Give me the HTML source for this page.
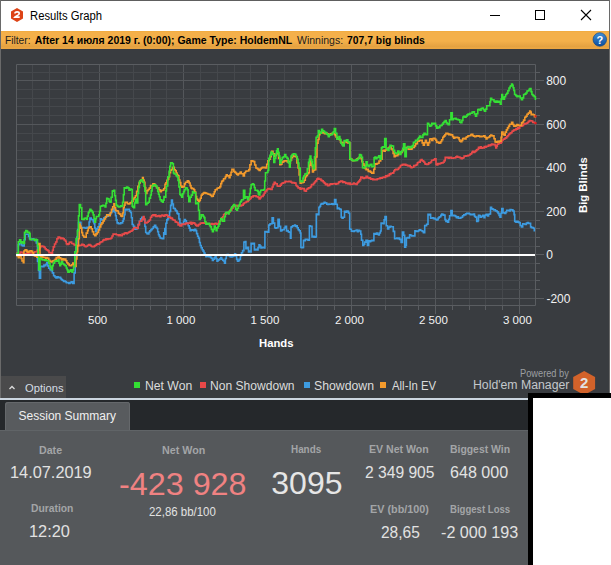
<!DOCTYPE html>
<html><head><meta charset="utf-8"><style>
html,body{margin:0;padding:0;width:611px;height:565px;overflow:hidden;background:#fff;}
body{position:relative;font-family:"Liberation Sans",sans-serif;}
div{position:absolute;white-space:nowrap;}
.t{line-height:1;transform-origin:0 0;}
svg{position:absolute;left:0;top:0;}
#win{left:0;top:0;width:610px;height:565px;background:#393c40;}
#title{left:0;top:0;width:610px;height:31px;background:#fff;}
#bt{left:0;top:0;width:610px;height:1px;background:#5e5e5e;}
#bl{left:0;top:0;width:1px;height:400px;background:#6a6a6a;}
#br{left:609px;top:0;width:1px;height:393px;background:#6a6a6a;}
#filter{left:1px;top:31px;width:608px;height:18px;background:linear-gradient(#f0a838 0px,#f4b04a 1px,#f4b04a 10px,#e3a040 16px,#eeaa44 17px,#e8a040 18px);}
#bigb{left:578.3px;top:213px;transform-origin:0 0;transform:rotate(-90deg);font-size:11.3px;line-height:1;font-weight:bold;color:#fff;}
#opt{left:1px;top:376px;width:65px;height:22px;background:#4a4a4b;}
#hl{left:0;top:398px;width:528px;height:2px;background:#ccd6e0;}
#dark{left:0;top:400px;width:528px;height:30px;background:#25282b;}
#tab{left:5px;top:402px;width:125px;height:28px;background:#585b5e;border-radius:3px 3px 0 0;box-shadow:inset 1px 1px 0 #65686b, inset -1px 0 0 #65686b;}
#panel{left:0;top:430px;width:611px;height:135px;background:#55585b;box-shadow:inset 0 1px 0 #606467;}
.sq{width:6px;height:6px;top:382px;}
#box{left:528px;top:393px;width:90px;height:172px;background:#fff;border:5px solid #000;border-bottom-width:4px;border-right:none;}
</style></head><body>
<div id="win"></div>
<div id="title"></div>
<div id="bt"></div>
<div id="bl"></div>
<div id="br"></div>
<svg width="30" height="30"><polygon points="17,8 23,11.5 23,18.5 17,22 11,18.5 11,11.5" fill="#dd4316"/><path d="M14.9,13.6 Q14.9,11.9 17.1,11.9 Q19.2,11.9 19.2,13.4 Q19.2,14.6 17.5,15.4 Q15.6,16.3 14.9,17.1 H19.7" fill="none" stroke="#fff" stroke-width="1.6"/></svg>
<svg width="611" height="31"><rect x="490" y="15" width="10" height="1" fill="#000"/><rect x="535.5" y="10.5" width="9" height="9" fill="none" stroke="#000" stroke-width="1"/><path d="M581,10 L591,20 M591,10 L581,20" stroke="#000" stroke-width="1.1"/></svg>
<div id="filter"></div>
<svg width="611" height="60" style="top:20px"><defs><linearGradient id="hg" x1="0" y1="0" x2="0" y2="1"><stop offset="0" stop-color="#3f8fd8"/><stop offset="1" stop-color="#0d4d9a"/></linearGradient></defs><circle cx="599.8" cy="19.5" r="6.8" fill="url(#hg)" stroke="#0a3f80" stroke-width="0.6"/><text x="599.8" y="23.5" text-anchor="middle" font-family="Liberation Sans" font-weight="bold" font-size="11" fill="#fff">?</text></svg>
<svg width="611" height="400">
<rect x="32" y="65" width="1" height="240" fill="#45484c"/>
<rect x="49" y="65" width="1" height="240" fill="#45484c"/>
<rect x="66" y="65" width="1" height="240" fill="#45484c"/>
<rect x="82" y="65" width="1" height="240" fill="#45484c"/>
<rect x="99" y="65" width="1" height="240" fill="#54575b"/>
<rect x="116" y="65" width="1" height="240" fill="#45484c"/>
<rect x="133" y="65" width="1" height="240" fill="#45484c"/>
<rect x="150" y="65" width="1" height="240" fill="#45484c"/>
<rect x="166" y="65" width="1" height="240" fill="#45484c"/>
<rect x="183" y="65" width="1" height="240" fill="#54575b"/>
<rect x="200" y="65" width="1" height="240" fill="#45484c"/>
<rect x="217" y="65" width="1" height="240" fill="#45484c"/>
<rect x="234" y="65" width="1" height="240" fill="#45484c"/>
<rect x="250" y="65" width="1" height="240" fill="#45484c"/>
<rect x="267" y="65" width="1" height="240" fill="#54575b"/>
<rect x="284" y="65" width="1" height="240" fill="#45484c"/>
<rect x="301" y="65" width="1" height="240" fill="#45484c"/>
<rect x="317" y="65" width="1" height="240" fill="#45484c"/>
<rect x="334" y="65" width="1" height="240" fill="#45484c"/>
<rect x="351" y="65" width="1" height="240" fill="#54575b"/>
<rect x="368" y="65" width="1" height="240" fill="#45484c"/>
<rect x="385" y="65" width="1" height="240" fill="#45484c"/>
<rect x="401" y="65" width="1" height="240" fill="#45484c"/>
<rect x="418" y="65" width="1" height="240" fill="#45484c"/>
<rect x="435" y="65" width="1" height="240" fill="#54575b"/>
<rect x="452" y="65" width="1" height="240" fill="#45484c"/>
<rect x="469" y="65" width="1" height="240" fill="#45484c"/>
<rect x="485" y="65" width="1" height="240" fill="#45484c"/>
<rect x="502" y="65" width="1" height="240" fill="#45484c"/>
<rect x="519" y="65" width="1" height="240" fill="#54575b"/>
<rect x="17" y="298" width="518" height="1" fill="#54575b"/>
<rect x="17" y="289" width="518" height="1" fill="#45484c"/>
<rect x="17" y="280" width="518" height="1" fill="#45484c"/>
<rect x="17" y="272" width="518" height="1" fill="#45484c"/>
<rect x="17" y="263" width="518" height="1" fill="#45484c"/>
<rect x="17" y="254" width="518" height="1" fill="#54575b"/>
<rect x="17" y="246" width="518" height="1" fill="#45484c"/>
<rect x="17" y="237" width="518" height="1" fill="#45484c"/>
<rect x="17" y="228" width="518" height="1" fill="#45484c"/>
<rect x="17" y="220" width="518" height="1" fill="#45484c"/>
<rect x="17" y="211" width="518" height="1" fill="#54575b"/>
<rect x="17" y="202" width="518" height="1" fill="#45484c"/>
<rect x="17" y="193" width="518" height="1" fill="#45484c"/>
<rect x="17" y="185" width="518" height="1" fill="#45484c"/>
<rect x="17" y="176" width="518" height="1" fill="#45484c"/>
<rect x="17" y="167" width="518" height="1" fill="#54575b"/>
<rect x="17" y="159" width="518" height="1" fill="#45484c"/>
<rect x="17" y="150" width="518" height="1" fill="#45484c"/>
<rect x="17" y="141" width="518" height="1" fill="#45484c"/>
<rect x="17" y="133" width="518" height="1" fill="#45484c"/>
<rect x="17" y="124" width="518" height="1" fill="#54575b"/>
<rect x="17" y="115" width="518" height="1" fill="#45484c"/>
<rect x="17" y="106" width="518" height="1" fill="#45484c"/>
<rect x="17" y="98" width="518" height="1" fill="#45484c"/>
<rect x="17" y="89" width="518" height="1" fill="#45484c"/>
<rect x="17" y="80" width="518" height="1" fill="#54575b"/>
<rect x="17" y="72" width="518" height="1" fill="#45484c"/>
<path d="M16.5,64.5H535.5V305.5H16.5Z" fill="none" stroke="#5a5d61" stroke-width="1"/>
<rect x="536" y="298" width="8" height="1" fill="#5a5d61"/>
<rect x="536" y="289" width="4" height="1" fill="#5a5d61"/>
<rect x="536" y="280" width="4" height="1" fill="#5a5d61"/>
<rect x="536" y="272" width="4" height="1" fill="#5a5d61"/>
<rect x="536" y="263" width="4" height="1" fill="#5a5d61"/>
<rect x="536" y="254" width="8" height="1" fill="#5a5d61"/>
<rect x="536" y="246" width="4" height="1" fill="#5a5d61"/>
<rect x="536" y="237" width="4" height="1" fill="#5a5d61"/>
<rect x="536" y="228" width="4" height="1" fill="#5a5d61"/>
<rect x="536" y="220" width="4" height="1" fill="#5a5d61"/>
<rect x="536" y="211" width="8" height="1" fill="#5a5d61"/>
<rect x="536" y="202" width="4" height="1" fill="#5a5d61"/>
<rect x="536" y="193" width="4" height="1" fill="#5a5d61"/>
<rect x="536" y="185" width="4" height="1" fill="#5a5d61"/>
<rect x="536" y="176" width="4" height="1" fill="#5a5d61"/>
<rect x="536" y="167" width="8" height="1" fill="#5a5d61"/>
<rect x="536" y="159" width="4" height="1" fill="#5a5d61"/>
<rect x="536" y="150" width="4" height="1" fill="#5a5d61"/>
<rect x="536" y="141" width="4" height="1" fill="#5a5d61"/>
<rect x="536" y="133" width="4" height="1" fill="#5a5d61"/>
<rect x="536" y="124" width="8" height="1" fill="#5a5d61"/>
<rect x="536" y="115" width="4" height="1" fill="#5a5d61"/>
<rect x="536" y="106" width="4" height="1" fill="#5a5d61"/>
<rect x="536" y="98" width="4" height="1" fill="#5a5d61"/>
<rect x="536" y="89" width="4" height="1" fill="#5a5d61"/>
<rect x="536" y="80" width="8" height="1" fill="#5a5d61"/>
<rect x="536" y="72" width="4" height="1" fill="#5a5d61"/>
<rect x="32" y="306" width="1" height="4" fill="#5a5d61"/>
<rect x="49" y="306" width="1" height="4" fill="#5a5d61"/>
<rect x="66" y="306" width="1" height="4" fill="#5a5d61"/>
<rect x="82" y="306" width="1" height="4" fill="#5a5d61"/>
<rect x="99" y="306" width="1" height="8" fill="#5a5d61"/>
<rect x="116" y="306" width="1" height="4" fill="#5a5d61"/>
<rect x="133" y="306" width="1" height="4" fill="#5a5d61"/>
<rect x="150" y="306" width="1" height="4" fill="#5a5d61"/>
<rect x="166" y="306" width="1" height="4" fill="#5a5d61"/>
<rect x="183" y="306" width="1" height="8" fill="#5a5d61"/>
<rect x="200" y="306" width="1" height="4" fill="#5a5d61"/>
<rect x="217" y="306" width="1" height="4" fill="#5a5d61"/>
<rect x="234" y="306" width="1" height="4" fill="#5a5d61"/>
<rect x="250" y="306" width="1" height="4" fill="#5a5d61"/>
<rect x="267" y="306" width="1" height="8" fill="#5a5d61"/>
<rect x="284" y="306" width="1" height="4" fill="#5a5d61"/>
<rect x="301" y="306" width="1" height="4" fill="#5a5d61"/>
<rect x="317" y="306" width="1" height="4" fill="#5a5d61"/>
<rect x="334" y="306" width="1" height="4" fill="#5a5d61"/>
<rect x="351" y="306" width="1" height="8" fill="#5a5d61"/>
<rect x="368" y="306" width="1" height="4" fill="#5a5d61"/>
<rect x="385" y="306" width="1" height="4" fill="#5a5d61"/>
<rect x="401" y="306" width="1" height="4" fill="#5a5d61"/>
<rect x="418" y="306" width="1" height="4" fill="#5a5d61"/>
<rect x="435" y="306" width="1" height="8" fill="#5a5d61"/>
<rect x="452" y="306" width="1" height="4" fill="#5a5d61"/>
<rect x="469" y="306" width="1" height="4" fill="#5a5d61"/>
<rect x="485" y="306" width="1" height="4" fill="#5a5d61"/>
<rect x="502" y="306" width="1" height="4" fill="#5a5d61"/>
<rect x="519" y="306" width="1" height="8" fill="#5a5d61"/>
<path d="M17.1,253.5H18.3V244.8H19.2V243.5H20.2V243.5H21.2V245.0H22.3V245.6H23.3V246.0H24.2V239.7H25.2V234.3H26.4V234.3H27.6V234.3H28.6V236.4H29.5V238.6H30.6V239.2H31.6V239.7H32.7V238.8H33.8V239.8H35.0V240.5H36.3V242.9H37.5V261.5H38.5V270.5H39.4V278.2H40.6V266.5H41.7V266.2H42.8V266.6H43.9V265.1H45.0V265.8H45.9V264.2H46.8V262.8H47.8V265.9H48.7V268.3H50.0V269.7H51.2V270.8H52.4V272.9H53.6V275.8H54.9V277.0H56.0V278.0H57.0V276.7H58.1V277.8H59.4V277.3H60.6V278.6H61.4V279.5H62.2V280.2H63.5V281.4H64.7V281.1H65.5V281.7H66.3V282.7H67.5V282.6H68.7V283.5H70.0V282.6H71.2V281.9H72.0V281.9H72.8V283.5H74.1V272.9H75.2V258.3H76.1V247.2H76.9V237.1H77.7V229.6H78.5V222.4H79.3V222.4H80.1V222.4H80.9V228.1H81.9V227.6H82.9V227.6H83.8V227.6H84.8V228.0H85.8V228.1H87.0V227.3H88.3V227.3H89.1V222.0H89.9V218.4H90.0V218.1H91.2V219.5H92.4V219.7H93.2V221.8H94.0V223.7H94.8V228.0H95.6V231.7H96.8V228.7H98.0V226.9H99.2V223.8H100.4V218.9H101.6V219.9H102.7V219.7H103.9V217.8H105.1V217.3H106.2V216.2H107.2V216.1H108.3V214.9H109.5V214.1H110.7V212.5H111.9V211.3H113.1V208.6H114.3V212.0H115.5V215.7H116.3V219.9H117.1V222.9H118.3V223.6H119.5V223.7H120.7V222.9H121.8V222.9H122.6V221.1H123.4V218.9H124.2V214.8H125.0V209.4H126.1V210.0H127.1V209.4H128.2V209.4H129.4V211.1H130.6V212.5H131.4V217.7H132.2V224.5H133.4V226.4H134.6V229.3H135.8V229.0H137.0V227.7H138.2V224.3H139.4V221.3H140.6V218.7H141.8V217.3H142.9V218.6H144.1V219.7H144.9V226.5H145.7V232.5H146.9V233.6H148.1V234.0H148.9V232.2H149.7V230.9H150.9V229.6H152.1V228.5H153.3V226.9H154.5V225.3H155.7V227.4H156.9V228.5H157.7V231.7H158.5V234.8H159.3V236.2H160.1V238.0H161.3V238.4H162.5V238.8H163.7V232.8H164.8V228.5H165.0V234.3H165.9V223.2H166.8V219.9H167.8V218.6H168.7V215.8H169.6V211.4H170.6V205.4H171.5V200.0H172.4V204.0H173.4V208.3H174.3V208.6H175.3V210.2H176.2V211.1H177.1V213.4H178.0V213.9H178.9V219.0H179.9V223.2H180.8V223.6H181.8V224.4H182.7V224.1H183.6V221.3H184.5V219.5H185.4V220.8H186.4V222.8H187.3V223.2H188.2V225.8H189.2V228.1H190.1V230.6H191.0V229.9H192.0V230.1H192.9V229.7H193.8V230.8H194.8V229.4H195.7V230.6H196.6V233.6H197.6V236.2H198.5V238.1H199.4V242.5H200.3V245.5H201.2V247.8H202.2V249.8H203.1V251.1H204.0V253.0H205.0V254.9H205.9V256.7H206.8V256.3H207.8V255.4H208.7V256.6H209.6V255.7H210.5V257.4H211.5V258.3H212.4V260.4H213.3V259.2H214.3V257.9H215.2V256.7H216.1V258.7H217.0V261.3H217.9V260.1H218.9V259.5H219.9V258.7H220.8V257.6H221.7V259.2H222.7V260.3H223.6V261.0H224.5V263.2H225.4V258.5H226.3V254.8H227.2V254.5H228.2V255.6H229.1V255.7H230.0V256.7H231.0V256.9H231.9V256.7H232.8V256.3H233.8V255.4H234.7V253.9H235.6V255.9H236.6V259.4H237.5V261.3H238.4V260.7H239.3V259.4H240.4V255.7H241.5V252.7H242.6V250.6H243.9V242.1H245.2V241.5H245.9V248.7H247.2V247.4H248.5V251.9H249.5V251.0H250.5V251.9H251.1V243.4H252.1V243.9H253.1V243.4H254.4V250.0H255.3V249.5H256.1V249.3H257.0V250.0H258.0V247.6H259.0V244.7H259.9V246.1H260.9V248.0H262.0V247.2H263.1V247.4H264.2V248.0H264.9V231.6H265.8V231.9H266.6V231.5H267.5V232.3H268.8V225.1H269.8V224.0H270.8V223.8H272.1V217.9H273.4V223.1H274.7V227.7H275.6V228.1H276.6V227.7H278.0V219.2H279.3V226.4H280.6V231.0H281.5V230.5H282.3V229.8H283.2V229.7H284.2V228.0H285.2V226.4H286.5V231.0H287.4V230.6H288.2V231.7H289.1V232.3H290.4V238.2H291.0V227.1H291.9V226.5H292.8V225.7H293.7V225.8H294.6V225.1H295.4V226.5H296.3V225.8H297.2V227.8H298.2V229.7H299.2V230.8H300.2V233.0H300.9V247.4H301.9V247.6H302.8V247.4H303.5V240.2H304.4V240.8H305.3V239.3H306.3V239.3H307.2V239.6H308.1V240.2H309.4V225.8H310.4V226.5H311.3V226.4H312.0V236.9H313.1V236.3H314.2V237.3H315.3V236.9H315.7V236.9H316.3V214.0H317.3V214.6H318.3V214.6H318.9V207.4H319.8V206.2H320.6V204.3H321.5V203.5H322.4V203.9H323.3V203.2H324.2V202.2H325.1V202.9H325.9V203.0H326.8V204.2H327.8V204.5H328.8V204.0H329.7V204.3H330.7V204.2H331.8V203.9H332.9V204.4H334.0V204.2H334.6V199.6H335.9V204.2H337.3V208.7H338.2V208.1H339.0V208.8H339.9V209.4H341.2V217.3H342.1V218.1H343.1V217.3H344.5V211.4H345.6V212.1H346.6V211.1H347.7V211.4H348.5V213.0H349.3V213.3H349.7V229.0H350.6V229.3H351.4V231.1H352.3V231.0H353.3V231.4H354.4V230.8H355.4V230.6H356.4V230.1H357.4V231.7H358.5V230.2H359.5V231.0H360.8V234.3H361.5V240.2H362.8V245.4H363.8V244.3H364.7V242.1H366.0V240.2H367.4V245.4H368.7V240.8H369.7V241.6H370.6V240.9H371.6V240.2H372.6V240.8H373.9V233.6H374.8V234.1H375.6V234.1H376.5V233.0H377.5V234.3H378.5V234.9H379.4V233.0H380.4V231.0H381.1V223.1H382.1V223.2H383.1V223.8H384.1V219.9H385.0V216.6H386.3V225.8H387.6V229.0H388.8V227.1H390.0V226.2H391.0V226.8H392.0V226.8H393.3V231.4H394.6V238.6H395.7V238.5H396.8V238.0H397.9V238.6H398.8V238.1H399.6V239.4H400.5V239.3H401.1V242.5H402.4V232.1H403.7V235.3H404.7V247.1H405.7V245.2H406.4V238.0H407.4V237.6H408.3V238.0H409.6V234.7H410.6V235.3H411.6V236.0H412.6V235.7H413.6V236.0H414.9V230.8H416.0V231.5H417.0V231.5H418.1V230.8H419.2V229.9H420.3V230.3H421.4V230.8H422.4V231.4H423.4V232.7H424.7V225.5H425.6V225.7H426.6V224.2H428.0V214.4H428.9V214.9H429.9V214.4H430.6V218.3H431.6V218.0H432.6V217.8H433.5V218.6H434.5V218.3H435.4V219.3H436.2V219.9H437.1V219.6H438.1V218.0H439.1V217.0H440.0V216.7H440.8V215.4H441.7V214.1H442.7V214.6H443.7V215.1H445.0V219.6H445.9V221.4H446.7V220.9H447.6V222.3H448.6V219.4H449.6V215.7H450.9V210.5H452.2V215.7H453.3V215.2H454.3V215.6H455.4V216.4H456.4V217.6H457.4V216.8H458.4V218.3H459.4V218.3H460.5V217.6H461.5V217.2H462.6V215.7H463.8V214.9H465.0V214.6H465.9V213.7H466.8V213.4H468.1V213.3H469.3V214.0H470.4V214.7H471.5V214.2H472.5V214.8H473.6V214.0H474.5V216.2H475.4V217.1H476.7V221.4H477.9V220.8H478.5V215.2H479.4V215.5H480.3V217.1H481.6V216.2H482.8V215.2H484.0V217.7H484.9V215.4H485.9V214.6H486.8V214.4H487.7V215.9H488.6V214.2H489.5V214.0H490.5V207.3H491.6V208.9H492.6V209.1H493.5V209.9H494.4V209.7H495.4V210.9H496.3V211.0H497.2V211.9H498.1V213.4H499.1V215.5H500.0V217.1H500.9V213.3H501.8V208.5H503.0V212.8H503.9V212.9H504.9V213.4H505.8V212.0H506.7V210.3H507.9V210.2H509.2V211.0H510.1V209.6H511.0V209.7H511.9V209.9H512.9V211.0H514.1V214.6H514.7V221.4H515.9V222.1H517.1V221.4H518.0V222.1H519.0V222.6H520.2V225.5H521.4V226.9H522.7V223.8H523.9V224.0H525.1V224.4H526.4V223.1H527.6V222.6H528.5V223.4H529.4V223.2H530.6V226.9H531.5V227.8H532.5V227.5H533.4V228.2H534.3V230.6" fill="none" stroke="#3d9be0" stroke-width="1.6" stroke-linejoin="miter" stroke-linecap="square"/>
<path d="M17.1,253.0H18.2V253.8H19.2V253.7H20.3V252.1H21.4V252.8H22.3V252.2H23.3V253.8H24.2V253.7H25.2V253.5H26.1V253.6H27.0V252.8H28.0V253.2H28.9V252.8H29.9V253.0H30.9V252.9H31.8V252.2H32.8V252.7H33.8V252.8H34.7V251.8H35.6V251.7H36.6V251.4H37.5V249.7H38.5V249.6H39.4V247.9H40.3V246.8H41.3V246.0H42.3V246.3H43.3V246.6H44.2V247.4H45.2V248.9H46.2V249.7H47.2V250.1H48.1V250.9H49.0V252.6H50.0V252.6H50.8V253.0H51.6V253.4H52.5V250.3H53.3V246.9H54.5V244.0H55.7V242.0H56.9V238.7H58.1V237.1H59.4V237.6H60.6V238.7H61.8V238.0H63.0V238.7H64.2V240.0H65.5V241.2H66.3V243.7H67.1V244.4H68.2V243.9H69.3V242.2H70.4V242.0H71.6V243.5H72.8V243.6H73.9V244.7H75.0V245.1H76.1V245.2H77.3V245.9H78.5V245.2H79.6V245.4H80.7V245.2H81.8V244.4H83.0V244.9H84.2V246.0H85.3V246.6H86.4V246.3H87.5V245.2H88.8V244.6H90.0V245.2H91.1V246.2H92.1V246.7H93.2V246.8H94.3V245.9H95.3V245.3H96.4V244.4H97.5V243.8H98.5V244.1H99.6V242.8H100.6V242.0H101.7V241.8H102.7V240.4H103.8V239.6H104.8V240.0H105.9V238.8H106.9V239.5H107.9V238.7H108.9V238.9H109.9V238.8H111.0V238.0H112.0V236.0H113.1V234.0H114.2V234.2H115.2V234.0H116.3V234.8H117.3V234.7H118.3V235.6H119.3V234.8H120.3V235.6H121.3V235.7H122.2V234.0H123.2V234.5H124.2V233.2H125.2V232.7H126.2V233.7H127.2V233.0H128.2V232.5H129.2V231.9H130.2V231.3H131.2V231.0H132.2V230.1H133.0V229.1H133.8V227.7H134.9V227.6H135.9V227.7H137.0V228.5H138.2V224.9H139.4V221.3H140.6V221.3H141.8V219.7H142.6V218.3H143.3V216.5H144.1V218.9H144.9V222.9H146.0V222.9H147.0V222.2H148.1V221.3H149.3V220.0H150.5V217.3H151.7V215.5H152.9V214.9H153.9V215.7H154.9V214.9H155.9V216.4H156.9V216.5H157.9V215.9H158.9V215.6H159.9V216.6H160.9V215.7H161.9V215.0H162.9V215.7H163.8V216.3H164.8V215.7H165.0V214.8H165.9V214.8H166.8V215.2H167.8V216.9H168.7V216.7H169.6V217.3H170.6V218.5H171.5V218.0H172.4V219.5H173.3V220.0H174.3V220.3H175.2V221.9H176.2V222.3H177.1V222.5H178.1V225.0H179.0V224.2H179.9V226.0H180.8V225.9H181.8V224.2H182.7V224.1H183.6V224.1H184.5V224.5H185.5V223.2H186.4V223.1H187.3V223.8H188.3V223.1H189.2V223.2H190.1V222.4H191.1V224.1H192.0V222.6H192.9V223.2H193.8V222.9H194.7V224.0H195.7V225.1H196.6V225.9H197.5V226.0H198.4V224.6H199.3V224.3H200.3V223.1H201.2V223.2H202.1V222.9H203.1V223.2H204.1V223.0H205.0V222.3H205.9V223.5H206.8V223.7H207.8V224.3H208.7V224.1H209.6V224.5H210.5V224.1H211.5V223.6H212.4V224.4H213.3V224.1H214.2V223.8H215.2V223.4H216.1V224.0H217.0V224.1H217.9V223.6H218.9V221.1H219.9V220.8H220.8V219.5H221.7V217.9H222.7V216.7H223.6V214.7H224.5V213.9H225.4V214.3H226.3V212.7H227.3V213.0H228.2V212.2H229.1V212.0H230.0V210.0H231.0V209.9H231.9V208.1H232.9V206.8H233.8V206.5H234.7V205.5H235.6V205.6H236.6V205.3H237.5V206.1H238.4V205.7H239.3V205.5H240.3V205.9H241.2V205.4H242.2V205.1H243.2V203.8H244.2V202.7H245.2V202.5H246.2V201.6H247.2V201.4H248.2V200.4H249.1V199.3H250.1V198.4H251.1V196.7H252.1V196.9H253.1V195.9H254.1V196.0H255.1V195.9H256.1V196.7H257.1V196.6H258.1V197.4H259.1V199.0H260.1V197.8H261.1V196.3H262.1V196.4H263.1V195.0H264.1V193.3H265.0V191.8H266.0V190.6H266.9V189.5H267.9V188.7H268.9V188.5H270.0V189.3H271.0V189.5H272.1V187.0H273.1V184.4H274.2V182.3H275.2V183.6H276.2V183.8H277.2V186.0H278.2V186.3H279.2V186.3H280.2V185.1H281.2V183.8H282.2V183.1H283.2V182.8H284.1V182.6H285.1V181.3H286.0V181.7H287.0V181.5H288.0V181.7H289.0V181.3H290.0V181.4H291.0V182.3H292.0V183.0H292.9V182.5H293.9V182.9H294.9V183.1H296.0V185.5H297.0V186.5H298.1V187.9H299.1V187.7H300.1V189.2H301.1V188.3H302.1V188.7H303.2V188.6H304.2V190.6H305.3V191.1H306.4V189.3H307.4V188.6H308.5V187.9H309.5V187.7H310.5V186.6H311.5V184.6H312.5V184.7H313.5V183.4H314.6V182.0H315.6V180.9H316.7V179.1H317.7V178.4H318.8V179.2H319.9V179.0H321.0V180.4H322.1V180.9H323.2V182.0H324.3V183.1H325.4V184.8H326.5V184.1H327.6V185.7H328.6V185.5H329.6V184.4H330.6V183.7H331.6V184.2H332.6V183.7H333.6V183.7H334.6V183.6H335.6V184.2H336.6V183.5H337.6V183.7H338.6V182.1H339.6V181.8H340.6V181.1H341.6V181.0H342.6V182.4H343.6V181.8H344.7V182.5H345.8V183.5H346.9V183.1H348.0V183.9H349.1V183.1H350.2V184.4H351.3V184.3H352.4V184.0H353.5V183.1H354.4V183.9H355.3V184.0H356.2V184.4H357.1V183.0H357.9V182.1H358.8V181.1H359.8V179.6H360.8V177.1H361.7V177.1H362.6V178.0H363.5V178.4H364.4V177.7H365.2V177.9H366.1V176.4H367.2V177.4H368.3V178.1H369.4V177.8H370.5V179.1H371.7V178.8H372.8V179.8H373.9V179.3H375.0V179.8H376.1V179.8H377.1V178.9H378.1V178.7H379.1V178.6H380.1V177.8H381.2V178.3H382.3V177.5H383.4V177.1H384.5V177.4H385.6V175.9H386.7V176.4H387.6V175.3H388.5V175.6H389.4V173.8H390.0V174.4H390.9V173.3H391.9V173.3H392.8V172.9H393.8V171.0H394.7V169.8H395.7V169.4H396.6V169.6H397.6V169.3H398.5V168.0H399.4V167.3H400.4V165.5H401.3V165.2H402.2V164.6H403.1V164.3H404.0V164.9H404.9V164.4H405.8V165.1H406.6V165.0H407.5V165.6H408.4V165.9H409.3V165.6H410.2V166.7H411.1V167.8H412.0V167.3H412.9V167.2H413.8V165.5H414.6V165.8H415.5V165.2H416.4V164.6H417.4V162.8H418.3V162.3H419.3V162.1H420.2V160.4H421.2V159.5H422.1V160.8H423.1V161.2H424.0V162.3H424.9V163.9H425.9V164.2H426.8V164.4H427.8V164.1H428.7V162.8H429.7V163.0H430.6V162.0H431.6V160.3H432.5V160.2H433.6V159.7H434.6V158.8H436.0V164.4H436.9V164.9H437.8V163.5H438.7V163.9H439.6V163.7H440.5V163.3H441.4V162.8H442.2V163.0H443.1V162.3H444.1V160.6H445.2V157.4H446.3V157.8H447.4V157.4H448.4V158.2H449.5V157.4H450.4V157.3H451.4V158.3H452.3V158.1H453.2V158.0H454.1V157.9H455.0V157.7H455.9V156.7H456.8V156.4H457.6V157.3H458.5V157.0H459.4V157.4H460.3V157.9H461.3V158.7H462.2V158.1H463.1V157.7H464.1V156.0H465.0V156.2H466.0V155.9H467.0V156.0H468.0V155.4H468.9V155.3H469.9V154.2H470.9V153.7H471.8V152.4H472.7V151.2H473.6V152.4H474.6V151.7H475.5V150.9H476.5V149.9H477.5V149.2H478.5V147.2H479.4V148.1H480.4V146.8H481.4V148.3H482.3V147.9H483.2V148.0H484.2V146.6H485.2V147.2H486.1V146.4H487.2V146.2H488.4V145.1H489.5V145.8H490.6V144.9H491.5V144.1H492.5V144.8H493.4V144.3H494.3V144.2H495.1V145.6H495.8V147.9H496.6V146.2H497.3V144.2H498.2V143.6H499.2V142.5H500.2V143.3H501.1V141.9H502.0V140.2H503.0V139.2H503.9V139.1H504.8V138.2H505.8V137.9H506.7V136.6H507.7V135.8H508.6V134.4H509.7V133.4H510.9V132.8H512.0V131.3H513.1V130.6H514.0V129.8H515.0V129.9H516.0V128.6H516.9V129.1H517.8V127.6H518.8V128.1H519.7V126.3H520.6V126.1H521.5V126.0H522.5V125.5H523.5V124.3H524.4V123.9H525.4V123.6H526.3V123.3H527.2V122.8H528.2V121.6H529.3V120.6H530.4V120.9H531.5V121.0H532.7V122.4H533.6V122.4H534.5V122.8H535.4V123.1" fill="none" stroke="#e84a4a" stroke-width="1.6" stroke-linejoin="miter" stroke-linecap="square"/>
<path d="M17.1,256.0H18.3V257.8H19.2V256.4H20.2V256.0H21.1V258.5H22.0V260.9H23.3V262.8H23.9V251.0H24.9V250.1H25.8V249.7H26.7V251.1H27.6V252.2H28.6V251.8H29.5V251.0H30.5V250.8H31.6V251.3H32.6V252.8H33.5V255.0H34.4V256.0H35.6V256.2H36.9V257.2H37.8V249.9H38.8V243.5H40.0V256.0H40.9V257.2H41.9V256.5H42.8V257.5H43.7V257.2H44.7V257.5H45.6V258.1H46.5V257.5H47.5V258.4H48.8V260.2H50.0V261.5H51.1V261.9H52.2V261.0H53.3V260.7H54.3V260.3H55.2V259.4H56.2V257.5H57.1V257.9H58.1V256.6H59.2V257.9H60.3V258.4H61.4V259.9H62.5V258.8H63.6V260.0H64.7V259.1H65.8V260.7H66.8V262.8H67.9V264.0H69.2V265.5H70.4V265.6H71.6V264.7H72.8V263.1H74.0V265.5H75.2V266.4H76.1V258.9H76.9V251.7H77.7V245.7H78.5V238.7H79.3V224.1H80.1V226.0H80.9V228.1H81.8V232.6H82.6V235.5H83.8V237.0H85.0V237.1H86.2V233.1H87.5V230.6H88.3V228.3H89.1V227.3H90.0V226.9H91.2V228.8H92.4V231.7H93.6V234.5H94.8V235.6H96.0V233.9H97.2V232.5H98.4V229.9H99.6V226.9H100.8V224.5H101.9V222.9H103.1V220.9H104.3V218.9H105.5V216.7H106.7V214.9H107.9V215.0H109.1V215.7H110.3V212.7H111.5V209.4H112.7V206.8H113.9V203.8H114.7V207.7H115.5V210.2H116.3V210.9H117.1V211.0H118.3V213.3H119.5V214.1H120.7V215.9H121.8V216.5H122.6V213.0H123.4V207.8H124.2V205.3H125.0V202.2H126.2V202.4H127.4V203.8H128.6V204.0H129.8V203.0H130.9V202.5H131.9V201.1H133.0V199.0H134.2V197.5H135.4V195.8H136.6V191.4H137.8V186.3H139.0V183.0H140.2V180.7H141.3V179.7H142.5V177.5H143.3V180.0H144.1V182.3H144.9V187.5H145.7V193.4H146.9V190.7H148.1V189.5H149.3V188.1H150.5V185.5H151.7V185.6H152.9V183.9H154.1V184.4H155.3V186.3H156.5V187.6H157.7V187.9H158.9V189.7H160.1V191.8H161.3V190.4H162.5V190.3H163.7V188.7H164.8V187.9H165.0V184.2H165.9V182.8H166.9V180.4H167.8V179.2H168.7V176.7H169.6V172.6H170.6V170.2H171.5V169.5H172.5V167.5H173.4V167.4H174.3V169.7H175.3V170.8H176.2V173.0H177.1V175.1H178.0V175.8H178.9V180.1H179.9V182.6H180.8V186.0H181.7V187.2H182.7V186.3H183.6V187.0H184.5V183.9H185.4V182.3H186.3V182.2H187.3V180.9H188.2V181.4H189.1V183.0H190.1V185.6H191.0V187.9H191.9V188.7H192.9V188.5H193.8V189.7H194.7V192.0H195.7V196.6H196.6V199.0H197.6V200.1H198.5V201.8H199.4V200.5H200.3V198.2H201.2V195.3H202.1V194.1H203.1V193.4H204.0V192.5H204.9V192.9H205.9V193.4H206.8V193.5H207.7V194.0H208.7V194.2H209.6V194.4H210.5V195.2H211.5V196.4H212.4V196.2H213.3V194.0H214.3V191.7H215.2V189.7H216.1V189.6H217.1V188.3H218.0V188.0H218.9V187.9H219.8V186.6H220.8V183.6H221.7V181.4H222.6V180.6H223.6V178.7H224.5V178.6H225.4V176.6H226.3V174.9H227.2V176.0H228.2V175.9H229.1V177.7H230.0V175.1H231.0V172.3H231.9V169.3H232.8V169.4H233.8V171.4H234.7V172.1H235.6V173.0H236.6V174.3H237.5V174.9H238.4V173.7H239.4V173.4H240.3V172.1H241.3V173.8H242.2V173.8H243.2V176.0H244.4V172.8H245.6V171.2H246.7V171.0H247.7V171.0H248.8V169.6H249.9V164.8H251.1V160.8H252.3V161.1H253.5V161.6H254.7V165.0H255.9V168.0H257.0V168.5H258.0V169.4H259.1V170.4H260.2V169.0H261.2V168.0H262.3V167.2H263.4V167.6H264.4V167.4H265.5V168.0H266.7V164.2H267.9V160.8H269.1V159.3H270.3V156.8H271.1V153.2H271.8V151.3H273.0V153.8H274.2V156.1H275.3V155.5H276.3V153.6H277.4V152.9H278.6V158.4H279.8V164.8H280.9V164.3H281.9V162.2H283.0V161.6H284.1V160.8H285.1V161.0H286.2V160.8H287.3V162.0H288.3V161.7H289.4V163.2H290.4V160.2H291.5V157.6H292.5V155.3H293.6V156.4H294.6V156.2H295.7V156.8H296.9V163.0H298.1V168.0H299.1V175.0H300.2V183.1H301.1V182.5H302.0V182.8H302.9V182.3H304.1V180.2H305.3V176.8H306.4V175.4H307.4V173.6H308.5V172.8H309.3V165.3H310.1V159.2H311.3V165.7H312.5V172.0H313.5V170.2H314.5V169.6H315.8V157.0H317.0V143.2H318.0V139.5H319.0V134.6H319.9V133.2H320.7V132.5H321.6V132.0H322.6V132.9H323.5V133.0H324.5V133.7H325.4V133.2H326.4V133.2H327.3V133.9H328.3V134.6H329.4V134.9H330.4V133.7H331.5V133.5H332.5V133.4H333.6V133.3H334.5V134.5H335.3V135.8H336.2V137.3H337.3V139.1H338.4V138.8H339.4V139.6H340.5V142.3H341.6V142.6H342.6V142.9H343.6V142.8H344.5V141.4H345.5V141.2H346.6V142.5H347.8V142.9H348.9V142.6H349.8V159.2H350.8V159.0H351.8V160.2H352.8V160.6H353.8V160.5H354.8V160.5H355.9V159.9H357.0V158.8H358.0V158.2H359.1V157.4H360.2V157.2H361.1V158.6H361.9V161.8H362.8V163.8H363.9V165.4H365.0V168.4H366.1V169.8H367.2V169.4H368.3V171.4H369.4V171.1H370.5V172.1H371.7V173.2H372.8V173.1H373.8V169.2H374.8V163.8H375.9V164.3H377.0V163.5H378.1V163.2H379.0V161.0H379.8V161.0H380.7V159.2H382.1V150.5H383.1V150.3H384.1V151.2H385.2V150.0H386.3V149.8H387.4V148.6H388.3V148.0H389.1V147.2H390.0V146.7H391.1V148.9H392.1V149.6H393.1V153.4H394.2V156.7H395.1V155.9H396.0V155.2H396.9V155.7H397.8V154.5H398.7V153.9H399.6V154.0H400.4V152.7H401.3V152.4H402.3V150.5H403.2V149.7H404.2V148.2H405.1V148.8H405.9V147.6H406.8V148.7H407.7V148.2H408.6V149.1H409.4V149.1H410.3V149.3H411.2V148.9H412.3V147.3H413.4V147.5H414.4V145.9H415.5V143.9H416.4V143.6H417.4V141.2H418.3V141.1H419.3V140.5H420.2V140.2H421.2V140.4H422.2V142.9H423.3V145.3H424.4V142.7H425.4V140.4H426.4V142.8H427.5V145.3H428.6V142.6H429.7V139.0H430.8V138.8H431.8V140.4H432.9V138.5H433.9V138.2H434.8V139.0H435.8V140.4H436.7V142.5H437.8V142.1H438.9V143.2H439.8V142.9H440.8V141.5H441.7V139.7H442.8V137.2H443.8V136.1H444.9V134.7H445.9V133.3H446.9V133.4H447.8V133.9H448.8V134.7H449.7V134.4H450.7V135.0H451.6V134.7H452.6V136.6H453.7V138.2H454.6V137.8H455.5V137.3H456.4V137.4H457.3V137.5H458.2V137.9H459.1V139.7H459.9V141.1H460.8V141.8H461.8V140.4H462.7V138.6H463.7V138.2H465.0V138.9H466.0V137.3H467.0V136.7H468.0V135.9H468.9V135.7H469.9V135.7H470.9V134.6H471.8V134.4H472.8V135.7H473.8V136.1H474.8V136.6H475.8V136.2H476.8V135.9H477.8V135.9H478.8V136.1H479.8V136.7H480.8V136.6H481.8V136.2H482.8V136.5H483.8V135.9H485.0V137.3H486.1V138.9H487.0V137.7H488.0V137.5H488.9V137.0H489.8V135.9H490.8V135.1H491.8V135.8H492.8V135.9H494.0V138.8H495.1V141.9H496.2V142.2H497.3V141.2H498.3V142.0H499.3V141.0H500.3V141.2H501.1V137.4H501.8V132.1H503.0V134.1H504.1V135.1H505.2V132.1H506.4V129.9H507.5V127.9H508.6V126.1H509.6V124.2H510.6V124.2H511.6V122.4H512.8V124.5H513.9V126.1H514.9V126.3H515.9V125.6H516.9V124.6H517.8V125.1H518.8V125.4H519.7V125.3H520.6V125.4H521.6V122.9H522.6V122.0H523.6V120.1H524.8V117.3H525.9V116.3H527.0V114.2H528.2V113.3H529.0V112.7H529.7V111.1H530.5V112.1H531.2V114.8H532.2V114.4H533.3V114.8H534.4V116.6H535.4V116.3" fill="none" stroke="#f39a2c" stroke-width="1.6" stroke-linejoin="miter" stroke-linecap="square"/>
<path d="M17.1,253.5H18.3V241.7H19.6V239.8H20.8V242.9H22.0V241.7H23.3V243.5H24.5V232.4H25.8V230.5H26.7V231.0H27.6V232.4H28.6V232.3H29.5V233.6H30.1V239.8H31.1V239.3H32.0V239.2H33.2V239.2H34.4V240.4H35.3V239.3H36.3V239.8H37.5V246.0H38.2V256.0H38.8V269.6H40.0V258.4H40.9V258.5H41.9V259.8H42.8V259.9H43.7V259.7H44.7V260.5H45.6V259.8H46.5V260.7H47.5V260.9H48.8V263.2H50.0V266.4H50.8V267.5H51.6V269.7H52.5V265.7H53.3V263.1H54.5V261.4H55.7V260.7H56.9V261.1H58.1V259.9H59.0V263.3H59.8V265.6H60.6V264.1H61.4V261.5H62.6V263.7H63.8V264.8H65.0V265.8H66.3V268.0H67.1V269.7H67.9V272.1H69.2V271.1H70.4V269.7H71.2V271.3H72.0V272.1H72.8V269.9H73.6V266.4H74.8V251.7H76.1V238.7H77.4V230.6H78.5V215.9H79.3V204.5H80.6V207.8H81.8V219.2H83.0V219.5H84.2V218.4H85.4V218.1H86.6V219.2H87.4V216.1H88.3V212.7H89.1V211.4H89.9V209.4H90.0V209.4H90.8V210.2H91.6V211.0H92.4V212.4H93.2V214.9H94.0V218.5H94.8V222.1H95.6V218.6H96.4V216.5H97.6V216.5H98.8V214.9H99.6V211.2H100.4V206.2H101.6V205.9H102.7V205.4H103.9V205.8H105.1V207.0H105.9V203.3H106.7V198.2H107.5V198.7H108.3V199.0H109.1V201.3H109.9V202.2H111.1V197.3H112.3V191.1H113.1V190.7H113.9V190.3H114.7V195.8H115.5V200.4H116.3V205.4H117.5V206.4H118.7V207.0H119.7V206.6H120.8V205.9H121.8V206.2H122.6V202.2H123.4V194.7H124.2V187.9H125.4V188.1H126.6V187.1H127.8V187.9H129.0V190.3H130.2V189.1H131.4V189.5H132.2V206.2H133.0V207.2H133.8V207.8H134.6V203.0H135.4V199.0H136.2V201.1H137.0V203.0H137.8V193.4H138.6V187.4H139.4V181.5H140.6V180.4H141.8V179.9H142.6V182.0H143.3V182.3H144.1V186.2H144.9V191.1H145.7V204.6H146.9V203.2H148.1V202.2H149.3V198.1H150.5V195.0H151.3V190.9H152.1V186.3H153.3V185.1H154.5V184.7H155.7V186.0H156.9V187.9H157.7V191.5H158.5V194.2H159.3V196.7H160.1V199.8H161.3V201.1H162.5V202.2H163.2V200.1H164.0V196.6H165.0V197.2H165.8V190.9H166.5V186.0H167.8V176.7H169.1V171.2H169.8V166.2H170.6V162.8H171.5V162.8H172.4V163.7H173.4V173.0H174.3V174.0H175.2V174.0H176.1V175.6H177.1V176.7H178.0V180.4H178.9V186.9H179.9V194.4H180.8V195.5H181.7V197.2H182.6V193.8H183.6V191.6H184.5V189.7H185.4V187.9H186.4V188.0H187.3V189.7H188.1V196.1H188.8V201.8H190.1V197.2H191.3V195.1H192.5V191.6H193.4V192.9H194.4V192.5H195.7V203.7H196.6V203.7H197.5V202.8H198.5V210.2H199.4V219.5H200.3V218.0H201.2V214.8H202.1V214.9H203.1V216.3H204.0V217.6H204.9V221.7H205.9V224.1H206.8V224.3H207.8V223.3H208.7V223.2H209.6V225.8H210.5V226.9H211.4V229.5H212.4V231.6H213.4V229.4H214.3V226.0H215.2V227.9H216.1V230.6H217.0V227.9H218.0V226.2H218.9V224.1H219.9V220.7H220.8V218.6H221.7V219.3H222.7V221.2H223.6V221.3H224.5V216.8H225.4V213.0H226.3V212.4H227.3V212.8H228.2V213.9H229.1V211.4H230.1V210.7H231.0V208.3H231.9V206.8H232.9V205.5H233.8V204.6H234.7V205.7H235.7V209.2H236.6V210.2H237.5V208.2H238.4V205.9H239.3V204.6H240.1V202.2H240.8V201.4H241.6V199.8H242.4V199.8H243.5V190.3H244.8V198.2H245.6V196.9H246.4V196.7H247.6V199.8H248.6V197.0H249.6V193.5H250.3V188.5H251.1V184.7H252.3V183.9H253.5V184.7H254.3V187.5H255.1V190.3H256.3V190.2H257.5V191.1H258.3V193.9H259.1V195.0H259.9V192.0H260.7V190.3H261.8V190.1H262.8V190.3H263.9V189.5H264.7V181.0H265.5V172.8H266.7V172.5H267.9V170.4H268.7V158.4H269.9V155.2H271.0V152.1H271.8V152.8H272.6V154.5H273.8V162.4H274.8V158.3H275.8V154.5H276.6V150.9H277.4V148.9H278.2V152.4H279.0V156.1H279.8V163.2H281.0V159.9H282.2V157.6H283.4V156.8H284.6V154.5H285.8V157.0H287.0V158.4H288.2V162.8H289.4V167.2H290.2V160.8H291.0V156.1H292.1V154.5H293.3V153.7H294.5V154.0H295.7V155.3H296.5V156.7H297.3V159.2H298.1V163.1H298.9V168.0H300.2V180.7H301.1V181.8H302.1V181.5H302.9V178.1H303.7V176.0H304.9V174.0H306.1V173.6H307.3V168.8H308.5V162.4H309.3V159.4H310.1V156.1H310.9V159.7H311.7V161.6H312.4V165.0H313.2V168.8H314.5V156.8H315.3V147.8H316.1V137.3H317.4V135.9H318.3V130.6H319.3V132.2H320.3V133.3H321.6V129.3H322.6V130.8H323.6V131.3H324.6V132.4H325.6V132.6H326.5V133.9H327.4V134.5H328.3V136.6H329.3V135.1H330.3V134.6H331.3V134.6H332.3V133.3H333.3V131.7H334.3V128.6H335.6V133.3H336.9V139.3H337.9V138.7H338.9V136.6H339.9V139.6H340.9V143.2H341.9V144.8H342.9V145.9H344.2V140.6H345.1V140.9H346.0V140.4H346.9V139.9H347.9V141.8H348.9V142.6H349.8V158.5H351.0V159.6H352.2V160.5H353.1V160.8H353.9V160.8H354.8V160.5H355.7V159.6H356.6V160.4H357.5V159.2H358.5V157.7H359.5V154.5H360.5V155.1H361.5V157.2H362.5V167.8H363.6V168.0H364.8V166.5H366.1V161.8H367.1V165.0H368.1V166.5H369.1V165.8H370.1V164.5H371.0V164.3H371.9V166.6H372.8V166.5H374.1V157.8H375.0V157.1H375.9V158.6H376.8V157.8H377.8V157.2H378.7V155.9H380.1V159.2H381.4V147.9H382.4V146.8H383.4V147.2H384.7V138.6H386.1V148.6H387.1V149.0H388.0V150.5H389.0V148.1H390.0V145.3H391.1V145.8H392.1V146.0H393.5V150.3H394.6V152.5H395.7V153.8H396.8V153.2H397.8V151.0H398.9V152.2H399.9V154.5H400.9V151.9H402.0V151.0H402.8V148.2H403.5V143.9H404.9V156.7H406.3V148.2H407.4V146.6H408.4V146.7H409.3V147.6H410.3V146.5H411.2V147.5H412.3V145.6H413.4V142.5H414.4V142.0H415.5V140.4H416.6V140.4H417.6V139.0H418.6V137.6H419.7V136.1H420.8V137.5H421.9V137.5H422.9V134.9H424.0V133.3H425.1V134.3H426.1V134.7H427.5V123.4H428.6V124.5H429.7V126.2H430.8V125.5H431.8V123.4H432.7V123.9H433.7V123.3H434.6V123.4H435.6V125.9H436.7V128.3H437.8V127.1H438.9V127.6H439.9V125.7H441.0V125.5H442.1V124.3H443.1V122.7H444.1V121.6H445.2V120.5H446.2V122.6H447.1V123.6H448.1V124.8H449.5V119.8H450.9V112.7H452.3V119.8H453.3V118.7H454.2V118.6H455.2V118.4H456.1V119.3H457.1V119.4H458.0V119.8H458.9V119.9H459.9V122.3H460.8V122.7H461.9V120.4H462.9V117.0H463.9V116.3H465.0V117.1H466.0V116.2H467.0V114.9H468.0V114.1H469.0V114.4H470.0V113.2H471.0V113.3H472.1V112.1H473.3V111.8H474.4V114.0H475.5V116.3H476.6V113.8H477.8V109.6H478.9V109.2H480.0V110.3H481.1V108.5H482.3V108.1H483.4V109.8H484.5V111.1H485.6V109.1H486.8V105.8H488.0V105.8H489.1V105.8H489.9V101.9H490.6V98.3H491.7V99.7H492.8V99.8H494.0V101.4H495.1V102.1H496.1V101.1H497.1V102.3H498.1V101.3H499.2V102.3H500.3V104.3H501.1V99.0H501.8V94.5H502.6V97.4H503.3V99.1H504.5V96.7H505.6V94.5H506.8V93.2H507.9V90.8H509.0V88.0H510.1V86.3H510.9V85.8H511.6V84.0H512.4V85.3H513.1V87.8H513.9V90.5H514.6V94.5H515.8V95.6H516.9V96.8H518.0V96.1H519.1V96.0H520.2V98.0H521.4V99.8H522.5V97.9H523.6V94.5H524.8V94.1H525.9V93.0H527.0V91.0H528.2V90.8H529.1V89.3H530.0V88.5H531.0V91.6H531.9V94.5H533.0V95.6H534.2V96.8H535.4V99.1" fill="none" stroke="#35e035" stroke-width="1.6" stroke-linejoin="miter" stroke-linecap="square"/>
<rect x="16" y="254" width="519" height="2" fill="#ffffff"/><rect x="534.5" y="115.3" width="2" height="2" fill="#e31b1b"/><rect x="534.5" y="122.2" width="2" height="2" fill="#e31b1b"/>
</svg>
<div id="bigb">Big Blinds</div>
<div id="opt"></div>
<svg width="30" height="20" style="top:376px"><path d="M9.5,13 L12,10.5 L14.5,13" fill="none" stroke="#dcdcdc" stroke-width="1.3"/></svg>
<div class="sq" style="left:134px;background:#33dd33"></div>
<div class="sq" style="left:200px;background:#e84848"></div>
<div class="sq" style="left:304px;background:#3d9be0"></div>
<div class="sq" style="left:380px;background:#f39a2c"></div>
<svg width="40" height="40" style="left:560px;top:360px"><polygon points="24.2,11 35.1,17.1 35.1,28.9 24.2,35 13.2,28.9 13.2,17.1" fill="#d2622a"/><text x="24.2" y="28" text-anchor="middle" font-family="Liberation Sans" font-weight="bold" font-size="15" fill="#e2e2e2">2</text></svg>
<div id="hl"></div>
<div id="dark"></div>
<div id="tab"></div>
<div id="panel"></div>
<div class="t" style="left:29.56px;top:9.80px;font-size:12px;color:#000;transform:scaleX(0.9387);">Results Graph</div>
<div class="t" style="left:4.53px;top:35.18px;font-size:10.5px;color:#1c1c1c;transform:scaleX(0.9720);">Filter:</div>
<div class="t" style="left:34.70px;top:35.18px;font-size:10.5px;font-weight:bold;color:#000;">After 14 июля 2019 г. (0:00); Game Type: HoldemNL</div>
<div class="t" style="left:297.00px;top:35.18px;font-size:10.5px;color:#1c1c1c;">Winnings:</div>
<div class="t" style="left:347.00px;top:35.18px;font-size:10.5px;font-weight:bold;color:#000;transform:scaleX(0.9873);">707,7 big blinds</div>
<div class="t" style="left:546.20px;top:74.70px;font-size:12px;color:#f2f2f2;">800</div>
<div class="t" style="left:546.20px;top:118.70px;font-size:12px;color:#f2f2f2;">600</div>
<div class="t" style="left:546.20px;top:161.50px;font-size:12px;color:#f2f2f2;">400</div>
<div class="t" style="left:546.20px;top:205.50px;font-size:12px;color:#f2f2f2;">200</div>
<div class="t" style="left:546.20px;top:248.80px;font-size:12px;color:#f2f2f2;">0</div>
<div class="t" style="left:546.40px;top:292.70px;font-size:12px;color:#f2f2f2;">-200</div>
<div class="t" style="left:88.00px;top:315.23px;font-size:11.5px;color:#f2f2f2">500</div>
<div class="t" style="left:166.50px;top:315.23px;font-size:11.5px;color:#f2f2f2">1 000</div>
<div class="t" style="left:250.50px;top:315.23px;font-size:11.5px;color:#f2f2f2">1 500</div>
<div class="t" style="left:335.00px;top:315.23px;font-size:11.5px;color:#f2f2f2">2 000</div>
<div class="t" style="left:419.00px;top:315.23px;font-size:11.5px;color:#f2f2f2">2 500</div>
<div class="t" style="left:503.00px;top:315.23px;font-size:11.5px;color:#f2f2f2">3 000</div>
<div class="t" style="left:258.80px;top:338.15px;font-size:11px;font-weight:bold;color:#fff;transform:scaleX(1.0265);">Hands</div>
<div class="t" style="left:24.60px;top:382.65px;font-size:11px;color:#d4dce4;transform:scaleX(1.0184);">Options</div>
<div class="t" style="left:144.58px;top:379.50px;font-size:12px;color:#dcdcdc;transform:scaleX(1.0156);">Net Won</div>
<div class="t" style="left:209.99px;top:379.50px;font-size:12px;color:#dcdcdc;transform:scaleX(1.0060);">Non Showdown</div>
<div class="t" style="left:313.88px;top:379.50px;font-size:12px;color:#dcdcdc;transform:scaleX(1.0228);">Showdown</div>
<div class="t" style="left:392.10px;top:379.50px;font-size:12px;color:#dcdcdc;transform:scaleX(0.9468);">All-In EV</div>
<div class="t" style="left:519.68px;top:369.30px;font-size:10px;color:#9c9fa2;transform:scaleX(0.9250);">Powered by</div>
<div class="t" style="left:472.62px;top:379.07px;font-size:12.5px;color:#c4c8cc;transform:scaleX(0.9804);">Hold&#39;em Manager</div>
<div class="t" style="left:18.60px;top:410.00px;font-size:12px;color:#f0f0f0;">Session Summary</div>
<div class="t" style="left:39.30px;top:444.65px;font-size:11px;font-weight:bold;color:#a3a5a7;transform:scaleX(0.9667);">Date</div>
<div class="t" style="left:9.78px;top:465.20px;font-size:16px;color:#e2e2e2;transform:scaleX(1.0203);">14.07.2019</div>
<div class="t" style="left:30.50px;top:503.35px;font-size:11px;font-weight:bold;color:#a3a5a7;transform:scaleX(0.9378);">Duration</div>
<div class="t" style="left:29.48px;top:524.20px;font-size:16px;color:#e2e2e2;transform:scaleX(1.0205);">12:20</div>
<div class="t" style="left:161.60px;top:444.85px;font-size:11px;font-weight:bold;color:#a3a5a7;transform:scaleX(0.9750);">Net Won</div>
<div class="t" style="left:118.79px;top:468.00px;font-size:32px;color:#f08282;transform:scaleX(1.0097);">-423 928</div>
<div class="t" style="left:149.30px;top:505.80px;font-size:12px;color:#e2e2e2;transform:scaleX(0.9529);">22,86 bb/100</div>
<div class="t" style="left:291.40px;top:444.45px;font-size:11px;font-weight:bold;color:#a3a5a7;transform:scaleX(0.8971);">Hands</div>
<div class="t" style="left:271.30px;top:467.00px;font-size:32px;color:#e6e6e6;">3095</div>
<div class="t" style="left:369.30px;top:444.25px;font-size:11px;font-weight:bold;color:#a3a5a7;transform:scaleX(0.9613);">EV Net Won</div>
<div class="t" style="left:364.50px;top:465.40px;font-size:16px;color:#e2e2e2;transform:scaleX(0.9761);">2 349 905</div>
<div class="t" style="left:449.60px;top:444.25px;font-size:11px;font-weight:bold;color:#a3a5a7;transform:scaleX(0.9460);">Biggest Win</div>
<div class="t" style="left:449.99px;top:465.40px;font-size:16px;color:#e2e2e2;transform:scaleX(1.0053);">648 000</div>
<div class="t" style="left:369.90px;top:504.25px;font-size:11px;font-weight:bold;color:#a3a5a7;transform:scaleX(0.9833);">EV (bb/100)</div>
<div class="t" style="left:380.80px;top:524.80px;font-size:16px;color:#e2e2e2;transform:scaleX(0.9675);">28,65</div>
<div class="t" style="left:449.60px;top:504.25px;font-size:11px;font-weight:bold;color:#a3a5a7;transform:scaleX(0.8710);">Biggest Loss</div>
<div class="t" style="left:441.00px;top:524.80px;font-size:16px;color:#e2e2e2;transform:scaleX(1.0092);">-2 000 193</div>
<div id="box"></div>
</body></html>
